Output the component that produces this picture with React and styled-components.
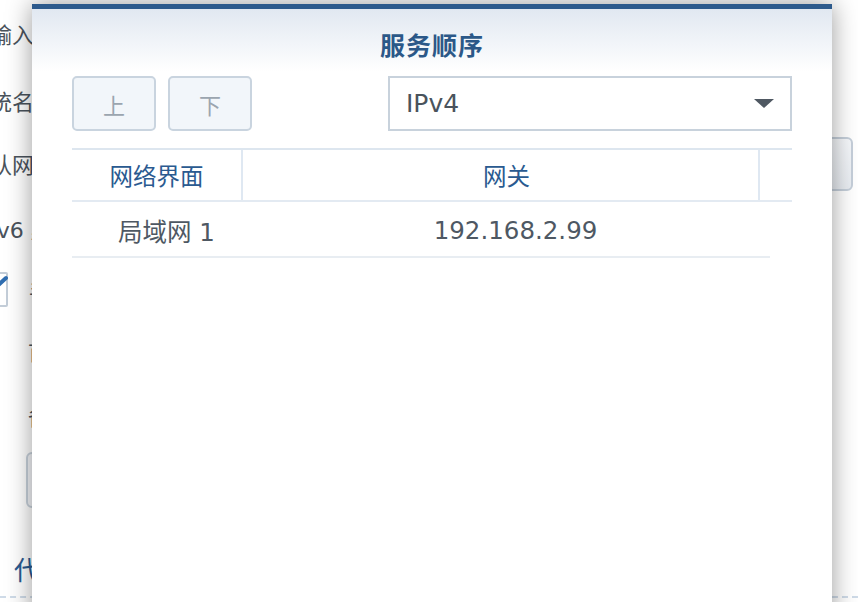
import React from "react";
import styled, { createGlobalStyle } from "styled-components";

const GlobalStyle = createGlobalStyle`
  html, body {
    margin: 0;
    padding: 0;
    background: #fff;
  }
  body {
    font-family: "DejaVu Sans", "Noto Sans CJK SC", sans-serif;
  }
`;

const Screen = styled.div`
  position: relative;
  width: 858px;
  height: 602px;
  overflow: hidden;
  background: #fff;
`;

/* page behind the dialog */
const BackForm = styled.div`
  display: flex;
  flex-direction: column;
  width: 868px;
  margin-left: -10px;
  color: #4a535c;
  font-size: 22px;
`;

const BackRow = styled.div`
  display: flex;
  align-items: ${(p) => p.$align || "center"};
  height: ${(p) => p.$h}px;
  padding-left: ${(p) => p.$indent || 0}px;
  box-sizing: border-box;
  border-bottom: ${(p) => (p.$dashed ? "2px dashed #cfdbe8" : "none")};
`;

const BackLabel = styled.span`
  margin-left: ${(p) => p.$x || 0}px;
  white-space: nowrap;
  align-self: center;
`;

const SectionTitle = styled.span`
  margin-left: ${(p) => p.$x || 0}px;
  color: #2a5a90;
  font-size: 26px;
  white-space: nowrap;
`;

const SideButton = styled.div`
  margin-left: auto;
  margin-right: 5px;
  width: 73px;
  height: 54px;
  box-sizing: border-box;
  border: 2px solid #c5cfda;
  border-radius: 6px;
  background: linear-gradient(#f6f8fb, #e9edf2);
`;

const CheckBox = styled.div`
  position: relative;
  margin-left: -10px;
  width: 28px;
  height: 35px;
  box-sizing: border-box;
  border: 2px solid #c3cdd8;
  border-radius: 2px;
  background: #fff;
`;

const CheckMark = styled.svg`
  position: absolute;
  left: 10px;
  top: 1px;
`;

const BackInput = styled.div`
  margin-left: 36px;
  margin-top: 8px;
  width: 200px;
  height: 56px;
  box-sizing: border-box;
  border: 2px solid #c8d2dc;
  border-radius: 6px;
  background: #f4f6f9;
`;

/* the dialog */
const Dialog = styled.div`
  position: absolute;
  left: 32px;
  top: 4px;
  width: 800px;
  height: 640px;
  background: #fff;
  border-top: 5px solid #2d5a8c;
  box-shadow: 0 0 24px rgba(0, 0, 0, 0.4);
  display: flex;
  flex-direction: column;
`;

const Header = styled.div`
  height: 63px;
  box-sizing: border-box;
  padding-top: 6px;
  display: flex;
  align-items: center;
  justify-content: center;
  background: linear-gradient(#e1e8f1, #ffffff);
`;

const Title = styled.h1`
  margin: 0;
  font-size: 25px;
  font-weight: bold;
  color: #2b5888;
  letter-spacing: 1px;
`;

const Toolbar = styled.div`
  display: flex;
  align-items: center;
  gap: 12px;
  height: 55px;
  margin-top: 4px;
  padding: 0 40px;
`;

const OrderButton = styled.button`
  width: 84px;
  height: 55px;
  box-sizing: border-box;
  border: 2px solid #c9d4df;
  border-radius: 5px;
  background: #f2f6fa;
  color: #9ba5af;
  font-family: inherit;
  font-size: 22px;
  padding: 0;
`;

const Select = styled.div`
  margin-left: auto;
  width: 404px;
  height: 55px;
  box-sizing: border-box;
  border: 2px solid #c8d2dc;
  background: #fff;
  display: flex;
  align-items: center;
  justify-content: space-between;
  padding: 0 16px 0 16px;
  color: #4a535c;
  font-size: 25px;
`;

const Arrow = styled.span`
  width: 0;
  height: 0;
  border-left: 10px solid transparent;
  border-right: 10px solid transparent;
  border-top: 9px solid #4f5862;
`;

const Table = styled.div`
  margin: 17px 40px 0;
  display: flex;
  flex-direction: column;
`;

const HeadRow = styled.div`
  display: grid;
  grid-template-columns: 171px 517px 32px;
  height: 54px;
  box-sizing: border-box;
  border-top: 2px solid #dde6ef;
  border-bottom: 2px solid #e3eaf2;
`;

const HeadCell = styled.div`
  display: flex;
  align-items: center;
  justify-content: center;
  padding-left: ${(p) => p.$shift || 0}px;
  border-right: ${(p) => (p.$last ? "none" : "2px solid #dfe8f2")};
  color: #2a5a90;
  font-size: 23.5px;
`;

const BodyRow = styled.div`
  display: grid;
  grid-template-columns: 171px 527px;
  width: 698px;
  height: 56px;
  box-sizing: border-box;
  border-bottom: 2px solid #e8edf2;
`;

const BodyCell = styled.div`
  display: flex;
  align-items: center;
  justify-content: center;
  padding-left: 18px;
  padding-top: 3px;
  color: #4e5863;
  font-size: 24.5px;
`;

export default function App() {
  return (
    <Screen>
      <GlobalStyle />
      <BackForm>
        <BackRow $h={66}>
          <BackLabel>输入</BackLabel>
        </BackRow>
        <BackRow $h={68}>
          <BackLabel $x={-22}>系统名称</BackLabel>
        </BackRow>
        <BackRow $h={57} $align="flex-end">
          <BackLabel $x={-22}>默认网关</BackLabel>
          <SideButton />
        </BackRow>
        <BackRow $h={74}>
          <BackLabel $x={-13}>IPv6 默认网关</BackLabel>
        </BackRow>
        <BackRow $h={49}>
          <CheckBox>
            <CheckMark width="16" height="16" viewBox="0 0 16 16">
              <path d="M2 14 L14 3" stroke="#2f6db0" strokeWidth="4" strokeLinecap="round" fill="none" />
            </CheckMark>
          </CheckBox>
          <BackLabel $x={21}>手动配置</BackLabel>
        </BackRow>
        <BackRow $h={72}>
          <BackLabel $x={38}>首选 DNS 服务器</BackLabel>
        </BackRow>
        <BackRow $h={58}>
          <BackLabel $x={38}>备用 DNS 服务器</BackLabel>
        </BackRow>
        <BackRow $h={96} $align="flex-start">
          <BackInput />
        </BackRow>
        <BackRow $h={58} $dashed>
          <SectionTitle $x={24}>代理服务器</SectionTitle>
        </BackRow>
      </BackForm>

      <Dialog>
        <Header>
          <Title>服务顺序</Title>
        </Header>
        <Toolbar>
          <OrderButton>上</OrderButton>
          <OrderButton>下</OrderButton>
          <Select>
            <span>IPv4</span>
            <Arrow />
          </Select>
        </Toolbar>
        <Table>
          <HeadRow>
            <HeadCell>网络界面</HeadCell>
            <HeadCell $shift={12}>网关</HeadCell>
            <HeadCell $last />
          </HeadRow>
          <BodyRow>
            <BodyCell>局域网 1</BodyCell>
            <BodyCell>192.168.2.99</BodyCell>
          </BodyRow>
        </Table>
      </Dialog>
    </Screen>
  );
}
